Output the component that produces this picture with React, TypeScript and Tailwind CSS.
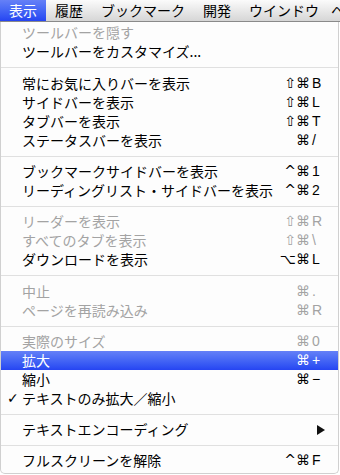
import React from "react";

type Item =
  | { sep: true; h?: number }
  | {
      sep?: false;
      label: string;
      mods?: string;
      k?: string;
      disabled?: boolean;
      checked?: boolean;
      hl?: boolean;
      submenu?: boolean;
    };

const items: Item[] = [
  { label: "ツールバーを隠す", disabled: true },
  { label: "ツールバーをカスタマイズ..." },
  { sep: true, h: 13 },
  { label: "常にお気に入りバーを表示", mods: "⇧⌘", k: "B" },
  { label: "サイドバーを表示", mods: "⇧⌘", k: "L" },
  { label: "タブバーを表示", mods: "⇧⌘", k: "T" },
  { label: "ステータスバーを表示", mods: "⌘", k: "/" },
  { sep: true, h: 12 },
  { label: "ブックマークサイドバーを表示", mods: "^⌘", k: "1" },
  { label: "リーディングリスト・サイドバーを表示", mods: "^⌘", k: "2" },
  { sep: true, h: 12 },
  { label: "リーダーを表示", mods: "⇧⌘", k: "R", disabled: true },
  { label: "すべてのタブを表示", mods: "⇧⌘", k: "\\", disabled: true },
  { label: "ダウンロードを表示", mods: "⌥⌘", k: "L" },
  { sep: true, h: 13 },
  { label: "中止", mods: "⌘", k: ".", disabled: true },
  { label: "ページを再読み込み", mods: "⌘", k: "R", disabled: true },
  { sep: true, h: 12 },
  { label: "実際のサイズ", mods: "⌘", k: "0", disabled: true },
  { label: "拡大", mods: "⌘", k: "+", hl: true },
  { label: "縮小", mods: "⌘", k: "−" },
  { label: "テキストのみ拡大／縮小", checked: true },
  { sep: true, h: 12 },
  { label: "テキストエンコーディング", submenu: true },
  { sep: true, h: 12 },
  { label: "フルスクリーンを解除", mods: "^⌘", k: "F" },
];

const jp = { fontFamily: '"Noto Sans CJK JP", "Noto Sans", sans-serif' };
const sym = { fontFamily: '"DejaVu Sans", "Liberation Sans", sans-serif' };
const lat = { fontFamily: '"Liberation Sans", "DejaVu Sans", sans-serif' };

export default function App() {
  const bar = ["表示", "履歴", "ブックマーク", "開発", "ウインドウ"];
  return (
    <div className="w-[340px] h-[475px] bg-white overflow-hidden relative">
      <div
        className="h-[22px] flex border-b border-[#8a8a8a] bg-gradient-to-b from-[#fbfbfb] to-[#d6d6d6] whitespace-nowrap overflow-hidden"
        style={jp}
      >
        {bar.map((b, i) => (
          <div
            key={b}
            className={
              "h-[21px] px-[9px] text-[14px] leading-[21px] shrink-0 " +
              (i === 0
                ? "bg-gradient-to-b from-[#6580f7] to-[#2644f2] text-white"
                : "text-black")
            }
          >
            {b}
          </div>
        ))}
        <div className="h-[21px] pl-[3px] text-[14px] leading-[21px] shrink-0 text-black">
          ヘ
        </div>
      </div>
      <div className="w-[339px] pt-[1px] pb-[3px] bg-[#fdfdfd] rounded-b-[5px] border-x border-b border-[#d0d0d0]">
        {items.map((it, i) =>
          it.sep ? (
            <div
              key={i}
              className="flex items-center"
              style={{ height: it.h }}
            >
              <div className="h-px w-full bg-[#e0e0e0]" />
            </div>
          ) : (
            <div
              key={i}
              className={
                "h-[19px] flex items-center pl-[21px] pr-[12px] relative text-[14px] leading-[19px] " +
                (it.hl
                  ? "bg-gradient-to-b from-[#6580f7] to-[#2644f2] text-white"
                  : it.disabled
                  ? "text-[#a3a3a3]"
                  : "text-black")
              }
            >
              {it.checked && (
                <span
                  className="absolute left-[6px] top-0 text-[14px] leading-[19px]"
                  style={sym}
                >
                  ✓
                </span>
              )}
              <span className="flex-1 whitespace-nowrap" style={jp}>
                {it.label}
              </span>
              {it.mods && (
                <span className="flex items-center">
                  <span className="text-[14px] text-right pr-[2px]" style={sym}>
                    {it.mods}
                  </span>
                  <span className="w-[14px] text-[14px] text-left" style={lat}>
                    {it.k}
                  </span>
                </span>
              )}
              {it.submenu && (
                <svg width="8" height="10" viewBox="0 0 8 10" className="mr-[1px]">
                  <path d="M0 0 L8 5 L0 10 Z" fill="#111" />
                </svg>
              )}
            </div>
          )
        )}
      </div>
    </div>
  );
}
